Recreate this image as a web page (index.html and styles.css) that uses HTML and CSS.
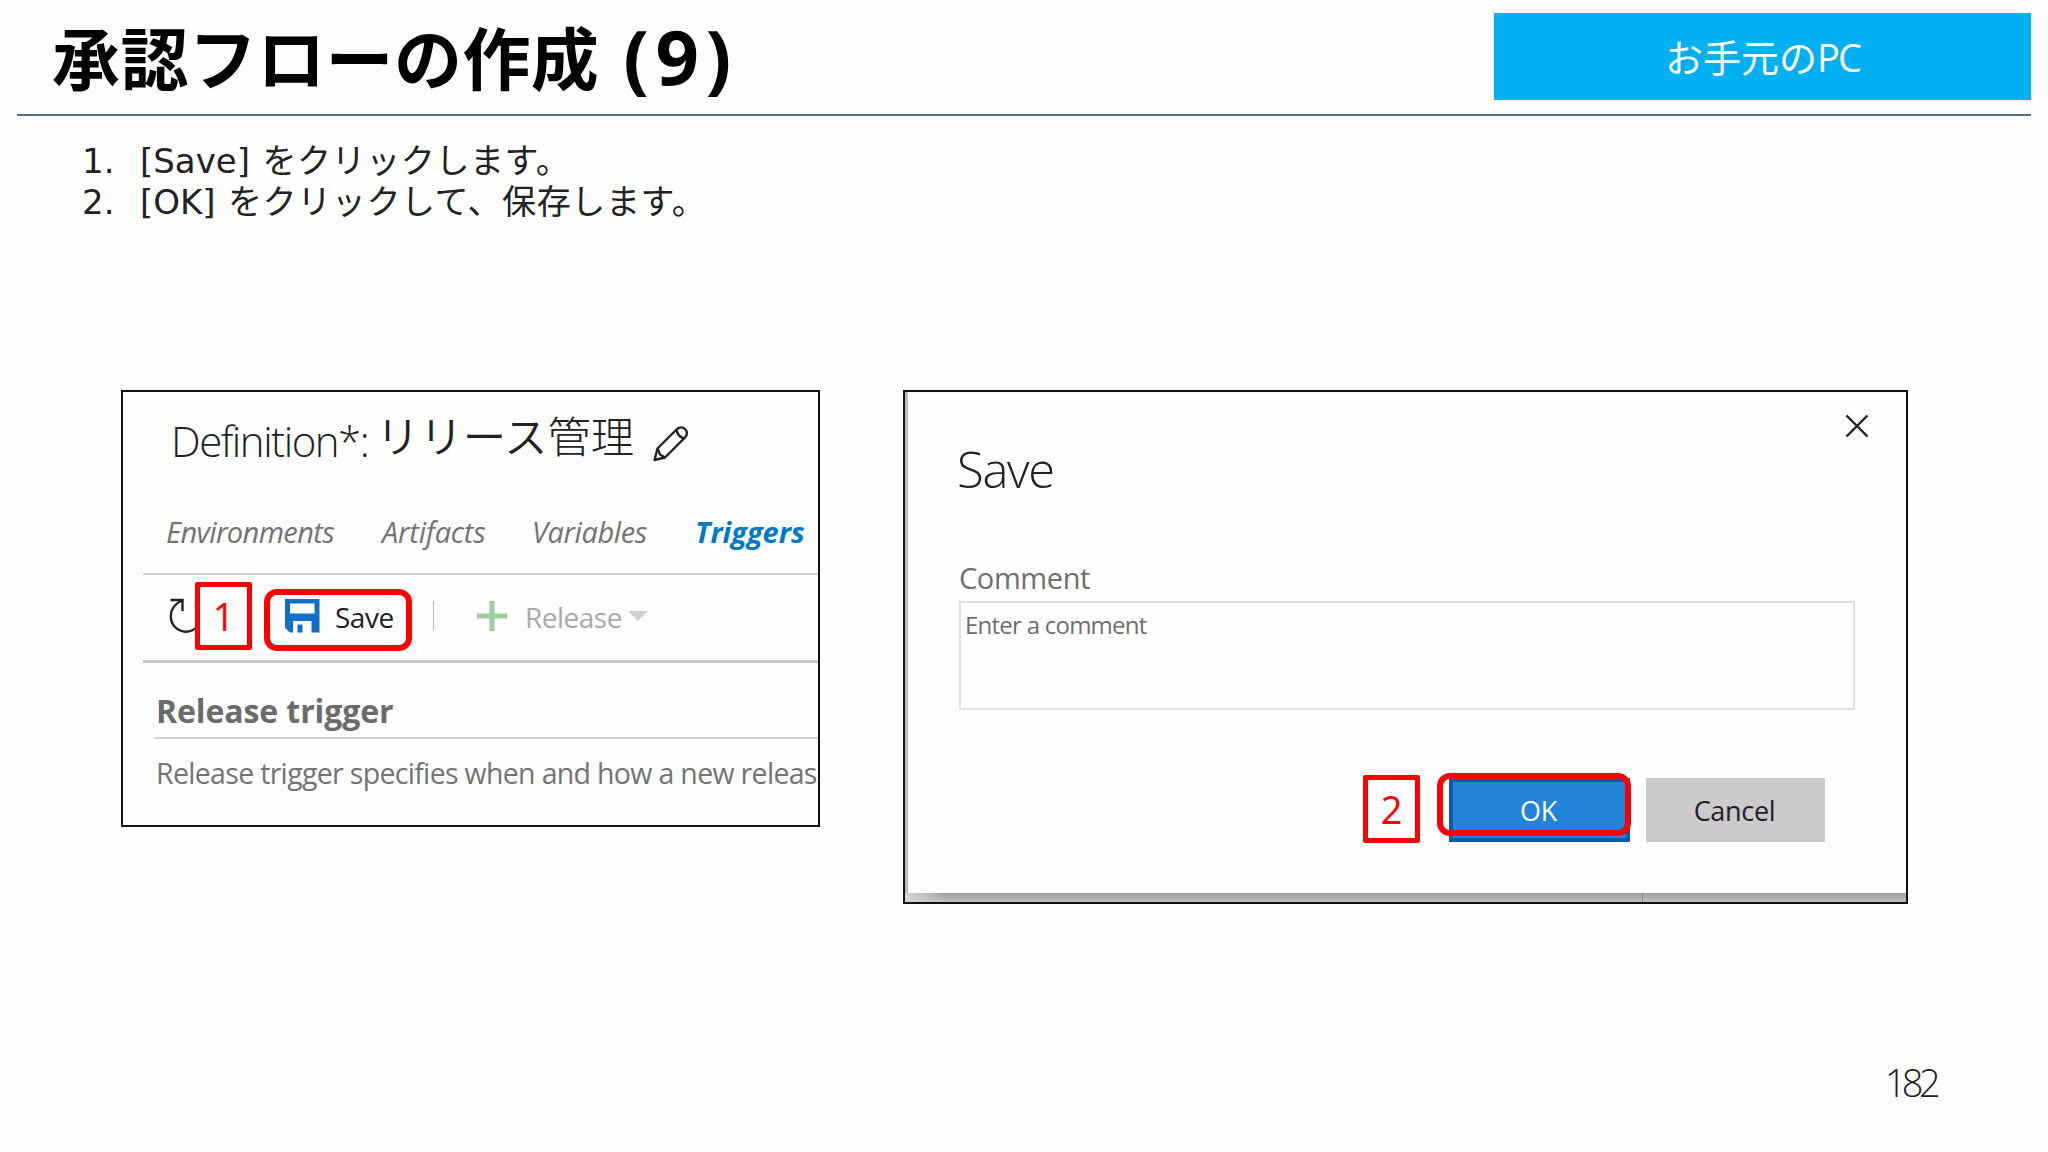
FILE: index.html
```
<!DOCTYPE html>
<html lang="ja">
<head>
    <meta charset="UTF-8">
    <meta name="viewport" content="width=device-width, initial-scale=1.0">
    <title>承認フローの作成 (9)</title>
    <link rel="stylesheet" href="styles.css">
</head>
<body>
    <div class="slide">
        <header class="header">
            <h1>承認フローの作成 <span class="count">(9)</span></h1>
            <div class="place"><span>お手元の</span><span class="place-latin">PC</span></div>
        </header>

        <ol class="steps">
            <li><span class="num">1.</span>[Save]<span class="ja"> をクリックします。</span></li>
            <li><span class="num">2.</span>[OK]<span class="ja"> をクリックして、保存します。</span></li>
        </ol>

        <main class="shots">
            <section class="shot definition">
                <div class="def-title">
                    <span class="def-label">Definition*:</span>
                    <span class="def-name"><span class="kana">リリース</span>管理</span>
                    <svg class="pencil" width="36" height="36" viewBox="0 0 36 36" fill="none" stroke="#222" stroke-width="2.4" stroke-linejoin="round">
                        <path d="M1.5 34 L4.5 22.5 L23.5 3.5 C26.5 .5 30 1 32 3 C34.5 5.5 34.5 9 32 11.5 L12 31.5 Z"/>
                        <path d="M4.5 22.5 L7 28.5 L12 31.5 M23.5 3.5 C24 8 26.5 11 31 12.5"/>
                    </svg>
                </div>

                <nav class="tabs">
                    <span class="tab environments">Environments</span>
                    <span class="tab artifacts">Artifacts</span>
                    <span class="tab variables">Variables</span>
                    <span class="tab active">Triggers</span>
                </nav>

                <div class="toolbar">
                    <svg class="refresh" width="34" height="36" viewBox="0 0 34 36" fill="none" stroke="#222" stroke-width="2.4">
                        <path d="M1.5 2 H13.5 V13"/>
                        <path d="M13 2.5 C6 5.5 1.8 11 1.8 18.5 A15.2 15.2 0 0 0 32.2 18.5 C32.2 13 30 8.5 26 6"/>
                    </svg>
                    <svg class="floppy" width="35" height="34" viewBox="0 0 35 34">
                        <path fill="#0f6fc9" fill-rule="evenodd" d="M0 0 H34.5 V33.5 H26.5 V22 H8 V33.5 H5 L0 29 Z M5 4.5 V14.5 H29.5 V4.5 Z"/>
                        <rect x="12.5" y="25.5" width="5" height="8" fill="#0f6fc9"/>
                    </svg>
                    <span class="tool-text save">Save</span>
                    <span class="divider"></span>
                    <svg class="plus" width="30" height="30" viewBox="0 0 30 30">
                        <path d="M15 0 V30 M0 15 H30" stroke="#9bd09c" stroke-width="5"/>
                    </svg>
                    <span class="tool-text release">Release</span>
                    <span class="caret"></span>
                </div>

                <h2 class="trigger-title">Release trigger</h2>
                <p class="trigger-text">Release trigger specifies when and how a new releas</p>

                <div class="badge badge-one">1</div>
                <div class="mark mark-save"></div>
            </section>

            <section class="shot dialog">
                <svg class="close" width="24" height="24" viewBox="0 0 24 24">
                    <path d="M1.5 1.5 L22.5 22.5 M22.5 1.5 L1.5 22.5" stroke="#222" stroke-width="2.4"/>
                </svg>
                <h2 class="dialog-title">Save</h2>
                <div class="label">Comment</div>
                <div class="comment">Enter a comment</div>
                <div class="buttons">
                    <div class="button ok">OK</div>
                    <div class="button cancel">Cancel</div>
                </div>
                <div class="shadow"></div>

                <div class="badge badge-two">2</div>
                <div class="mark mark-ok"></div>
            </section>
        </main>

        <footer class="page">182</footer>
    </div>
</body>
</html>
```
FILE: styles.css
```
* {
    box-sizing: border-box;
}

body {
    margin: 0;
    background: #fefefe;
    font-family: "Open Sans", "Noto Sans CJK JP", sans-serif;
    color: #222;
}

.slide {
    width: 2048px;
    height: 1152px;
    overflow: hidden;
    display: flex;
    flex-direction: column;
}

/* Header */
.header {
    height: 116px;
    margin: 0 17px;
    padding-left: 35px;
    display: flex;
    justify-content: space-between;
    align-items: flex-start;
    border-bottom: 2px solid #4f6b8f;
}

h1 {
    margin: 0;
    height: 114px;
    font-family: "DejaVu Sans", "Noto Sans CJK JP", sans-serif;
    font-size: 68px;
    font-weight: bold;
    line-height: 124px;
    letter-spacing: 0.4px;
    color: #000;
    white-space: nowrap;
}

.count {
    font-family: "Noto Sans", sans-serif;
    font-size: 76px;
    line-height: 1;
    letter-spacing: 6.5px;
}

.place {
    width: 537px;
    height: 87px;
    margin-top: 13px;
    display: flex;
    justify-content: center;
    background: #00b0f0;
    color: #fff;
    font-size: 38px;
    line-height: 88px;
}

.place-latin {
    font-weight: 400;
    letter-spacing: -2px;
}

/* Steps */
.steps {
    margin: 25px 0 0;
    padding: 0 0 0 82px;
    list-style: none;
    font-family: "DejaVu Sans", "Noto Sans CJK JP", sans-serif;
    font-size: 34px;
    line-height: 41px;
}

.steps li {
    display: flex;
    white-space: pre;
}

.num {
    width: 58px;
}

.ja {
    margin-left: 1px;
    letter-spacing: 0.6px;
}

/* Screenshots */
.shots {
    display: flex;
    align-items: flex-start;
    gap: 83px;
    margin: 167px 0 0 121px;
}

.shot {
    position: relative;
    border: 2px solid #111;
    overflow: hidden;
}

.definition {
    width: 699px;
    height: 437px;
}

.def-title {
    display: flex;
    align-items: flex-start;
    height: 107px;
    padding: 24px 0 0 48px;
    line-height: 50px;
    white-space: nowrap;
}

.def-label {
    width: 205px;
    font-size: 42px;
    font-weight: 300;
    letter-spacing: -1.5px;
}

.def-name {
    width: 277px;
    margin-top: -4px;
    font-size: 43.4px;
    font-weight: 300;
}

.kana {
    font-weight: 350;
}

.pencil {
    margin-top: 10px;
}

.tabs {
    display: flex;
    height: 74px;
    padding-left: 43px;
    font-size: 29px;
    font-style: italic;
    line-height: 66px;
    color: #737373;
}

.environments {
    width: 216px;
    letter-spacing: -0.6px;
}

.artifacts {
    width: 150px;
    letter-spacing: -0.2px;
}

.variables {
    width: 163px;
    letter-spacing: -0.4px;
}

.active {
    color: #0078c8;
    font-weight: bold;
}

.toolbar {
    display: flex;
    align-items: center;
    height: 90px;
    margin-left: 20px;
    padding: 0 0 4px 26px;
    border-top: 2px solid #d0d1d3;
    border-bottom: 3px solid #c6c7c9;
}

.floppy {
    margin-left: 82px;
}

.tool-text {
    padding-top: 3px;
    font-size: 28px;
    line-height: 40px;
    letter-spacing: -0.5px;
}

.save {
    width: 98px;
    margin-left: 15px;
}

.divider {
    width: 1px;
    height: 29px;
    background: #bbb;
}

.plus {
    margin-left: 43px;
}

.release {
    width: 103px;
    margin-left: 18px;
    color: #a9a9ab;
}

.caret {
    border: 10px solid transparent;
    border-top-color: #d0d0d3;
    border-bottom: 0;
}

.trigger-title {
    margin: 0 0 0 31px;
    padding-left: 2px;
    height: 76px;
    font-size: 32px;
    line-height: 95px;
    letter-spacing: -0.1px;
    color: #6b6b6b;
    border-bottom: 2px solid #d0d1d3;
}

.trigger-text {
    margin: 0;
    padding: 14px 0 0 33px;
    font-size: 28.5px;
    line-height: 40px;
    letter-spacing: -0.68px;
    color: #737373;
    white-space: nowrap;
}

/* Red marks laid over the screenshots */
.badge {
    position: absolute;
    width: 57px;
    height: 68px;
    border: 5px solid #f00;
    border-radius: 2px;
    background: #fefefe;
    color: #f00;
    font-size: 38px;
    line-height: 58px;
    text-align: center;
}

.badge-one {
    left: 72px;
    top: 190px;
}

.badge-two {
    left: 458px;
    top: 383px;
}

.mark {
    position: absolute;
    border: 6px solid #f00;
    border-radius: 13px;
}

.mark-save {
    left: 141px;
    top: 197px;
    width: 148px;
    height: 62px;
}

.mark-ok {
    left: 532px;
    top: 381px;
    width: 194px;
    height: 63px;
}

/* Save dialog */
.dialog {
    width: 1005px;
    height: 514px;
    padding-left: 54px;
    display: flex;
    flex-direction: column;
    box-shadow: inset 3px 0 1px #bbb;
}

.close {
    align-self: flex-end;
    margin: 22px 37px 0 0;
}

.dialog-title {
    margin: -1px 0 0 -2px;
    font-size: 49px;
    font-weight: 300;
    line-height: 64px;
    letter-spacing: -1.3px;
}

.label {
    margin: 54px 0 0;
    font-size: 29px;
    line-height: 46px;
    letter-spacing: -0.4px;
    color: #6f6f6f;
}

.comment {
    width: 896px;
    height: 109px;
    padding: 3px 4px;
    border: 2px solid #e0e0e4;
    font-size: 24px;
    line-height: 37px;
    letter-spacing: -0.75px;
    color: #6f6f6f;
}

.buttons {
    display: flex;
    gap: 16px;
    margin: 68px 0 0 490px;
}

.button {
    height: 64px;
    font-size: 27px;
    line-height: 66px;
    letter-spacing: -0.3px;
    text-align: center;
}

.ok {
    width: 181px;
    padding-right: 2px;
    border: 4px solid #0a5cab;
    line-height: 58px;
    background: #2284d9;
    color: #fff;
}

.cancel {
    width: 179px;
    padding-right: 2px;
    background: #cccacd;
}

.shadow {
    height: 9px;
    margin: auto 0 0 -54px;
    background: linear-gradient(90deg, #d8d8d8, transparent 40px, transparent 737px, #858387 737px, #858387 738px, transparent 738px), linear-gradient(#a09ea1, #c0bec1);
}

.page {
    margin: auto 112px 44px auto;
    font-size: 38px;
    font-weight: 300;
    line-height: 52px;
    letter-spacing: -4.6px;
}
```
